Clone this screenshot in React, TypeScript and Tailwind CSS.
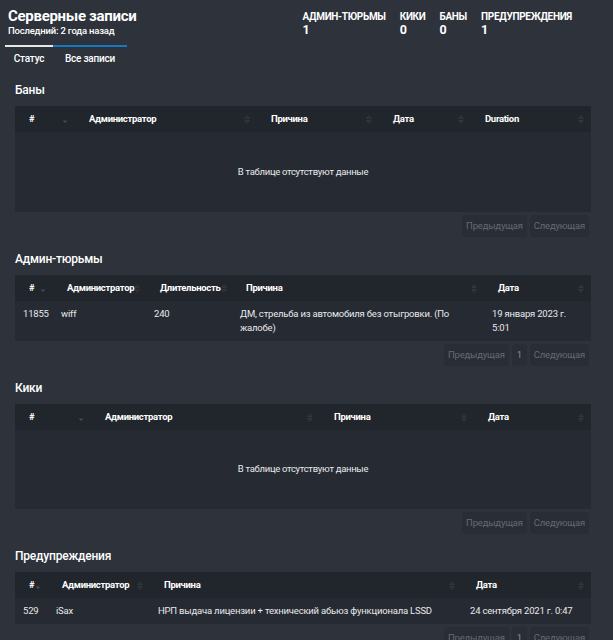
import React from 'react';

type Column = { label: string; width: number; sorted?: boolean };
type Section = {
  title: string;
  columns: Column[];
  rows: string[][];
  emptyHeight?: number;
};

const SortIcon: React.FC<{ sorted?: boolean }> = ({ sorted }) => (
  <svg width="6" height="9" viewBox="0 0 6 9" className="shrink-0">
    {!sorted && <path d="M3 0.8 L5.2 3.4 H0.8 Z" fill="none" stroke="#3b404b" strokeWidth="0.8" />}
    <path d="M3 8.2 L5.2 5.6 H0.8 Z" fill={sorted ? '#444a56' : 'none'} stroke={sorted ? 'none' : '#3b404b'} strokeWidth="0.8" />
  </svg>
);

const sections: Section[] = [
  {
    title: 'Баны',
    columns: [
      { label: '#', width: 60, sorted: true },
      { label: 'Администратор', width: 182 },
      { label: 'Причина', width: 122 },
      { label: 'Дата', width: 92 },
      { label: 'Duration', width: 120 },
    ],
    rows: [],
    emptyHeight: 80,
  },
  {
    title: 'Админ-тюрьмы',
    columns: [
      { label: '#', width: 38, sorted: true },
      { label: 'Администратор', width: 93 },
      { label: 'Длительность', width: 86 },
      { label: 'Причина', width: 252 },
      { label: 'Дата', width: 107 },
    ],
    rows: [['11855', 'wiff', '240', 'ДМ, стрельба из автомобиля без отыгровки. (По жалобе)', '19 января 2023 г. 5:01']],
  },
  {
    title: 'Кики',
    columns: [
      { label: '#', width: 76, sorted: true },
      { label: 'Администратор', width: 229 },
      { label: 'Причина', width: 154 },
      { label: 'Дата', width: 117 },
    ],
    rows: [],
    emptyHeight: 79,
  },
  {
    title: 'Предупреждения',
    columns: [
      { label: '#', width: 33, sorted: true },
      { label: 'Администратор', width: 102 },
      { label: 'Причина', width: 312 },
      { label: 'Дата', width: 129 },
    ],
    rows: [['529', 'iSax', 'НРП выдача лицензии + технический абьюз функционала LSSD', '24 сентября 2021 г. 0:47']],
  },
];

const stats = [
  { label: 'Админ-тюрьмы', value: 1 },
  { label: 'Кики', value: 0 },
  { label: 'Баны', value: 0 },
  { label: 'Предупреждения', value: 1 },
];

const DataTable: React.FC<{ section: Section }> = ({ section }) => {
  const { columns, rows, emptyHeight } = section;
  return (
    <div>
      <table className="w-full table-fixed border-collapse bg-[#262a32]">
        <colgroup>
          {columns.map((c) => (
            <col key={c.label} style={{ width: c.width }} />
          ))}
        </colgroup>
        <thead>
          <tr className="h-[26px] bg-[#21252c]">
            {columns.map((c) => (
              <th key={c.label} className="pl-[14px] pr-[7px] text-left text-[9.5px] font-bold tracking-[-0.3px] text-white">
                <div className="flex items-center justify-between">
                  <span className="whitespace-nowrap">{c.label}</span>
                  <SortIcon sorted={c.sorted} />
                </div>
              </th>
            ))}
          </tr>
        </thead>
        <tbody>
          {rows.length === 0 ? (
            <tr>
              <td colSpan={columns.length} className="text-center text-[9.5px] tracking-[-0.3px] text-[#e8e9eb]" style={{ height: emptyHeight }}>
                В таблице отсутствуют данные
              </td>
            </tr>
          ) : (
            rows.map((r, i) => (
              <tr key={i}>
                {r.map((cell, j) => (
                  <td key={j} className="align-top pl-[8px] pr-[6px] py-[6px] text-[9.5px] leading-[14px] tracking-[-0.2px] text-[#e8e9eb]">
                    {cell}
                  </td>
                ))}
              </tr>
            ))
          )}
        </tbody>
      </table>
      <div className="mt-[3px] mr-[2px] flex justify-end gap-[3px] text-[9.5px] tracking-[-0.2px] text-[#646a76]">
        <div className="flex h-[22px] items-center rounded-sm bg-[#292d35] px-[4px]">Предыдущая</div>
        {rows.length > 0 && (
          <div className="flex h-[22px] items-center rounded-sm bg-[#292d35] px-[5px] text-[#878d98]">1</div>
        )}
        <div className="flex h-[22px] items-center rounded-sm bg-[#292d35] px-[4px]">Следующая</div>
      </div>
    </div>
  );
};

export default function App() {
  return (
    <div className="min-h-screen bg-[#2d323b] pb-6 text-white" style={{ fontFamily: 'Roboto, "Noto Sans", sans-serif' }}>
      {/* Header */}
      <div className="flex justify-between pr-[41px]">
        <div className="pl-[8px] pt-[6px]">
          <h1 className="text-[15px] font-bold leading-[20px] tracking-[-0.3px]">Серверные записи</h1>
          <p className="mt-[-1px] text-[9.5px] font-medium leading-[12px] tracking-[-0.2px]">Последний: 2 года назад</p>
        </div>
        <div className="flex gap-[14px] pt-[10px]">
          {stats.map((s) => (
            <div key={s.label}>
              <p className="text-[10px] font-bold uppercase leading-[14px] tracking-[-0.3px]">{s.label}</p>
              <p className="text-[12.5px] font-bold leading-[12px]">{s.value}</p>
            </div>
          ))}
        </div>
      </div>

      {/* Tabs */}
      <div className="mt-[8px] ml-[5px] flex text-[10px] font-medium tracking-[-0.2px]">
        <div className="w-[48px] border-t-2 border-[#e5e7eb] pt-[5px] text-center leading-[14px]">Статус</div>
        <div className="w-[74px] border-t-2 border-[#1279c2] pt-[5px] text-center leading-[14px]">Все записи</div>
      </div>

      <div className="pl-[15px] pr-[22px] pt-[16px]">
        {sections.map((s) => (
          <div key={s.title} className="mb-[14px]">
            <h2 className="mb-[8px] text-[12px] font-medium leading-[16px] tracking-[-0.2px]">{s.title}</h2>
            <DataTable section={s} />
          </div>
        ))}
      </div>
    </div>
  );
}
